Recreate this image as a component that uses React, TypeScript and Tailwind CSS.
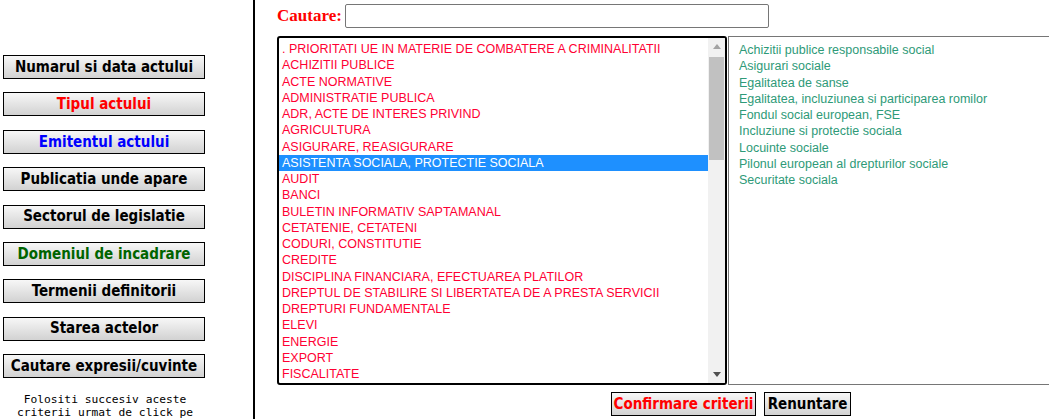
import React from 'react';

const criteria = [
  { label: 'Numarul si data actului', color: 'text-black' },
  { label: 'Tipul actului', color: 'text-[#ff0000]' },
  { label: 'Emitentul actului', color: 'text-[#0000ff]' },
  { label: 'Publicatia unde apare', color: 'text-black' },
  { label: 'Sectorul de legislatie', color: 'text-black' },
  { label: 'Domeniul de incadrare', color: 'text-[#006400]' },
  { label: 'Termenii definitorii', color: 'text-black' },
  { label: 'Starea actelor', color: 'text-black' },
  { label: 'Cautare expresii/cuvinte', color: 'text-black' },
];

const domains = [
  '. PRIORITATI UE IN MATERIE DE COMBATERE A CRIMINALITATII',
  'ACHIZITII PUBLICE',
  'ACTE NORMATIVE',
  'ADMINISTRATIE PUBLICA',
  'ADR, ACTE DE INTERES PRIVIND',
  'AGRICULTURA',
  'ASIGURARE, REASIGURARE',
  'ASISTENTA SOCIALA, PROTECTIE SOCIALA',
  'AUDIT',
  'BANCI',
  'BULETIN INFORMATIV SAPTAMANAL',
  'CETATENIE, CETATENI',
  'CODURI, CONSTITUTIE',
  'CREDITE',
  'DISCIPLINA FINANCIARA, EFECTUAREA PLATILOR',
  'DREPTUL DE STABILIRE SI LIBERTATEA DE A PRESTA SERVICII',
  'DREPTURI FUNDAMENTALE',
  'ELEVI',
  'ENERGIE',
  'EXPORT',
  'FISCALITATE',
];

const subDomains = [
  'Achizitii publice responsabile social',
  'Asigurari sociale',
  'Egalitatea de sanse',
  'Egalitatea, incluziunea si participarea romilor',
  'Fondul social european, FSE',
  'Incluziune si protectie sociala',
  'Locuinte sociale',
  'Pilonul european al drepturilor sociale',
  'Securitate sociala',
];

const btn =
  'h-[24px] border border-black bg-linear-to-b from-[#f7f7f7] to-[#d2d2d2] font-bold text-[15px] font-["DejaVu_Sans_Condensed","DejaVu_Sans",sans-serif] flex items-center justify-center whitespace-nowrap';

export default function App() {
  const selected = 7;

  return (
    <div className="flex h-[419px] w-[1049px] overflow-hidden bg-white">
      {/* left criteria column */}
      <div className="w-[253px] shrink-0 flex flex-col pt-[55px] pl-[3px]">
        <div className="w-[202px] flex flex-col gap-[13.4px]">
          {criteria.map((c) => (
            <button key={c.label} className={`${btn} ${c.color}`}>
              {c.label}
            </button>
          ))}
        </div>
        <p className="w-[204px] mt-[15px] text-center text-[11.25px] leading-[13px] font-['DejaVu_Sans_Mono',monospace] text-black">
          Folositi succesiv aceste
          <br />
          criterii urmat de click pe
        </p>
      </div>

      <div className="w-[2px] bg-black shrink-0" />

      {/* right search area */}
      <div className="flex-1 flex flex-col pl-[22px] pt-[4px]">
        <div className="flex items-center h-[24px]">
          <span className="w-[68px] font-['Liberation_Serif',serif] font-bold text-[17px] text-[#ff0000]">
            Cautare:
          </span>
          <input className="w-[424px] h-[24px] border border-[#767676] rounded-[2px] outline-none" />
        </div>

        <div className="flex mt-[8px] h-[349px]">
          <div className="w-[450px] h-full border-2 border-black rounded-[3px] flex overflow-hidden">
            <div className="flex-1 pt-[3px] font-['Liberation_Sans',sans-serif] text-[12.5px] leading-[16.25px] text-[#ff0033]">
              {domains.map((d, i) => (
                <div
                  key={d}
                  className={`h-[16.25px] pl-[3px] whitespace-nowrap ${
                    i === selected ? 'bg-[#1e90ff] text-white' : ''
                  }`}
                >
                  {d}
                </div>
              ))}
            </div>
            <div className="w-[17px] bg-[#f1f1f1] flex flex-col items-center">
              <div className="h-[17px] flex items-center justify-center">
                <svg width="8" height="5" viewBox="0 0 8 5">
                  <path d="M0 5 L4 0 L8 5 Z" fill="#a3a3a3" />
                </svg>
              </div>
              <div className="w-[15px] h-[103px] mt-[2px] bg-[#c1c1c1]" />
              <div className="flex-1" />
              <div className="h-[17px] flex items-center justify-center">
                <svg width="8" height="5" viewBox="0 0 8 5">
                  <path d="M0 0 L8 0 L4 5 Z" fill="#505050" />
                </svg>
              </div>
            </div>
          </div>

          <div className="flex-1 ml-[1px] border border-r-0 border-[#767676] pl-[10px] pt-[5px] font-['Liberation_Sans',sans-serif] text-[12.5px] leading-[16.25px] text-[#2e9a78]">
            {subDomains.map((s) => (
              <div key={s} className="whitespace-nowrap">
                {s}
              </div>
            ))}
          </div>
        </div>

        <div className="flex gap-[8px] mt-[7px] pl-[334px]">
          <button className={`${btn} w-[145px] text-[#ff0000]`}>Confirmare criterii</button>
          <button className={`${btn} w-[87px] text-black`}>Renuntare</button>
        </div>
      </div>
    </div>
  );
}
